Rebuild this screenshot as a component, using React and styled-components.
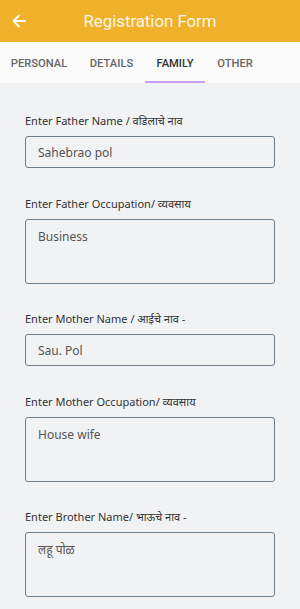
import React from "react";
import styled, { createGlobalStyle } from "styled-components";

const Global = createGlobalStyle`
  html, body { margin: 0; padding: 0; }
  body {
    font-family: "Noto Sans", "Noto Sans Devanagari", Roboto, sans-serif;
    background: #f1f2f4;
  }
  * { box-sizing: border-box; }
`;

const Page = styled.div`
  width: 300px;
  height: 609px;
  overflow: hidden;
  background: #f1f2f4;
  display: flex;
  flex-direction: column;
`;

const Header = styled.header`
  height: 42px;
  flex-shrink: 0;
  background: #f0b029;
  display: flex;
  align-items: center;
  padding-left: 11px;
`;

const BackButton = styled.button`
  border: none;
  background: none;
  padding: 0;
  width: 16px;
  height: 16px;
  display: flex;
  align-items: center;
  justify-content: center;
`;

const Title = styled.h1`
  flex: 1;
  margin: 0 0 0 -27px;
  text-align: center;
  font-family: Roboto, sans-serif;
  font-weight: 400;
  font-size: 16.8px;
  color: #fdf6e6;
`;

const Tabs = styled.nav`
  height: 41px;
  flex-shrink: 0;
  background: #fafafa;
  display: flex;
`;

const Tab = styled.div`
  position: relative;
  display: flex;
  align-items: center;
  justify-content: center;
  width: ${(p) => p.w}px;
  padding-top: 1px;
  font-family: Roboto, sans-serif;
  font-weight: 500;
  font-size: 11.2px;
  color: ${(p) => (p.active ? "#333" : "#666")};
  &::after {
    content: "";
    display: ${(p) => (p.active ? "block" : "none")};
    position: absolute;
    left: 0;
    right: 0;
    bottom: 0;
    height: 2px;
    background: #c9a0f7;
  }
`;

const Form = styled.div`
  display: flex;
  flex-direction: column;
  padding: 31px 25px 0 25px;
`;

const Field = styled.div`
  display: flex;
  flex-direction: column;
  margin-bottom: 28.5px;
`;

const Label = styled.label`
  font-size: 11px;
  color: #333;
  line-height: 14px;
  margin-bottom: 8px;
`;

const Box = styled.div`
  height: ${(p) => (p.multi ? 65 : 32)}px;
  border: 1.5px solid #6e7d8c;
  border-radius: 3px;
  padding: ${(p) => (p.multi ? "8px 12px" : "0 12px")};
  display: flex;
  align-items: ${(p) => (p.multi ? "flex-start" : "center")};
  font-size: 12px;
  color: #555;
`;

const fields = [
  { label: "Enter Father Name / वडिलाचे नाव", value: "Sahebrao pol" },
  { label: "Enter Father Occupation/ व्यवसाय", value: "Business", multi: true },
  { label: "Enter Mother Name / आईचे नाव -", value: "Sau. Pol" },
  { label: "Enter Mother Occupation/ व्यवसाय", value: "House wife", multi: true },
  { label: "Enter Brother Name/ भाऊचे नाव -", value: "लहू पोळ", multi: true },
];

export default function App() {
  return (
    <>
      <Global />
      <Page>
        <Header>
          <BackButton aria-label="back">
            <svg width="16" height="16" viewBox="0 0 16 16" fill="none" stroke="#fff" strokeWidth="1.8" strokeLinecap="round" strokeLinejoin="round">
              <path d="M14 8H2.5M8 2.5L2.5 8L8 13.5" />
            </svg>
          </BackButton>
          <Title>Registration Form</Title>
        </Header>
        <Tabs>
          <Tab w={78}>PERSONAL</Tab>
          <Tab w={67}>DETAILS</Tab>
          <Tab w={60} active>FAMILY</Tab>
          <Tab w={60}>OTHER</Tab>
        </Tabs>
        <Form>
          {fields.map((f) => (
            <Field key={f.label}>
              <Label>{f.label}</Label>
              <Box multi={f.multi}>{f.value}</Box>
            </Field>
          ))}
        </Form>
      </Page>
    </>
  );
}
